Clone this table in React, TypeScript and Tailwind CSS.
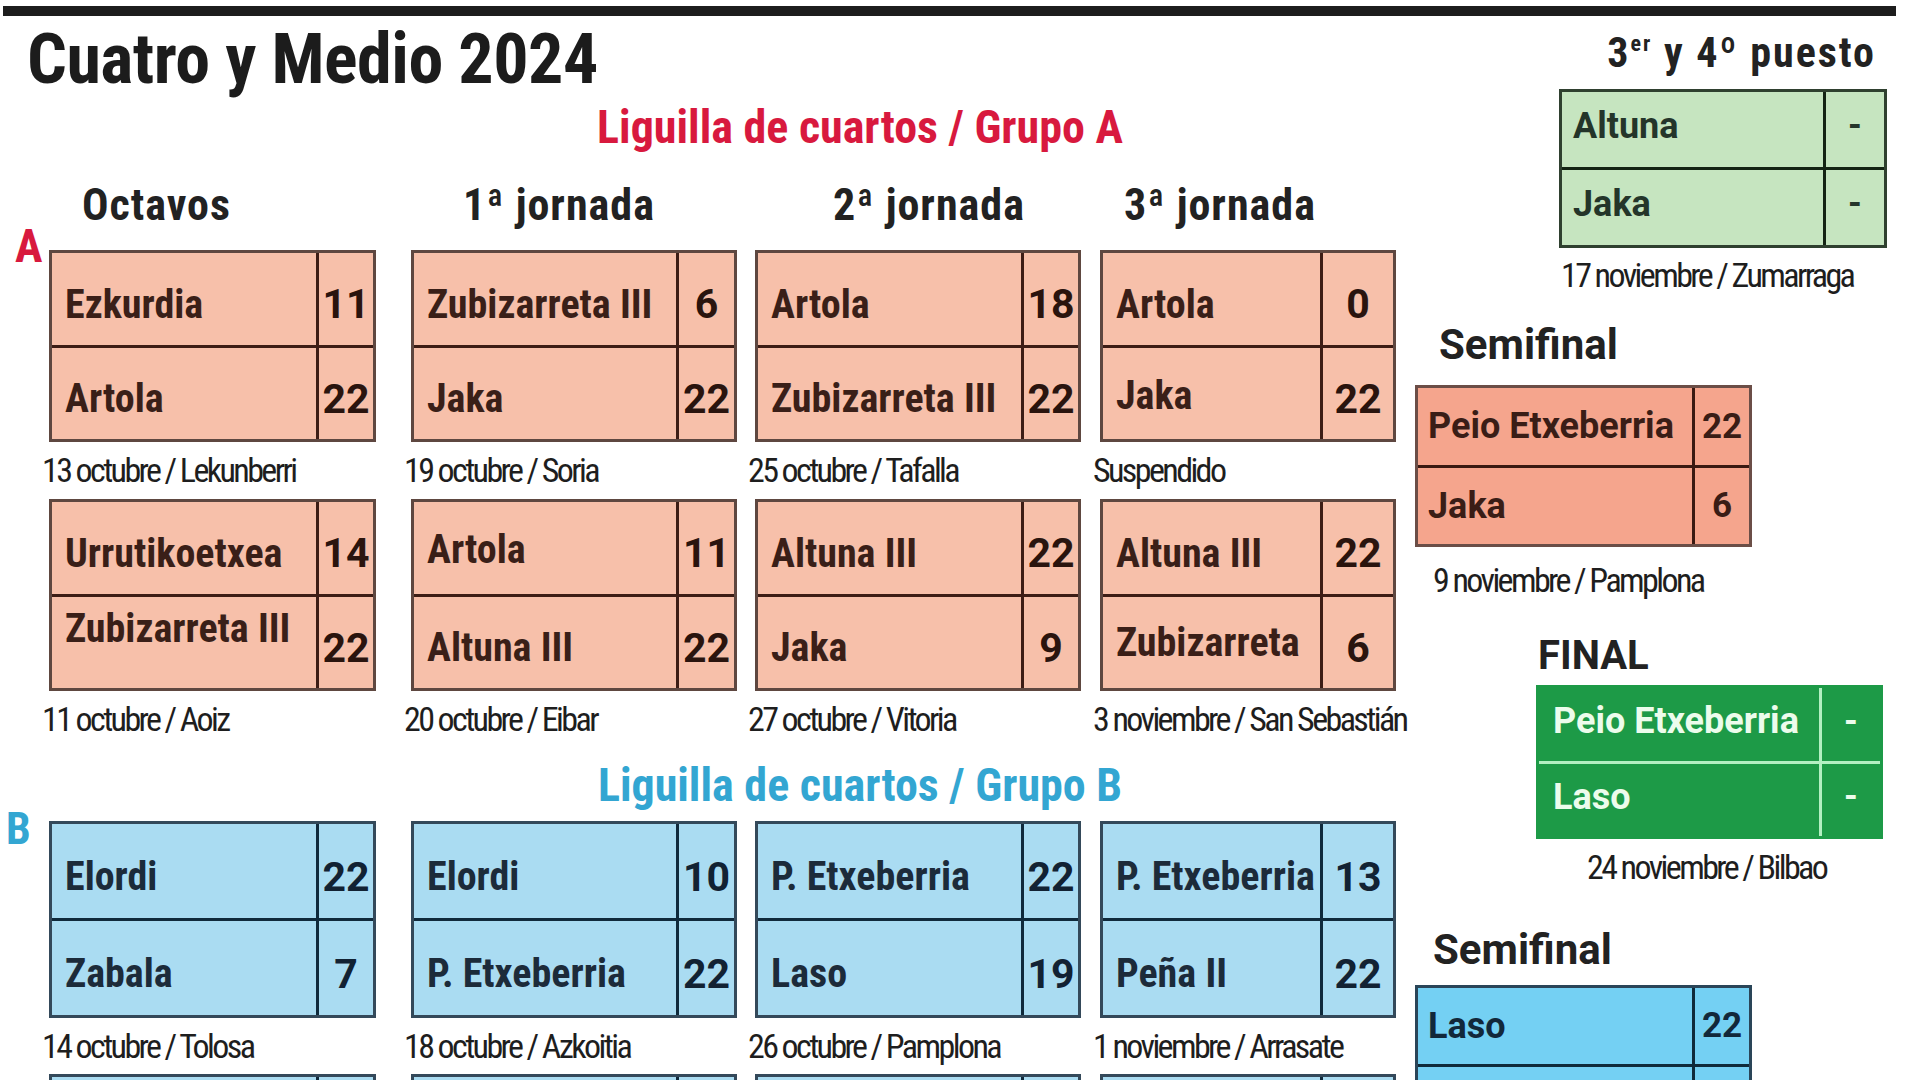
const COND = "font-['Roboto_Condensed',sans-serif]";
const WIDE = "font-['Roboto',sans-serif]";
const CAPTION = `${COND} whitespace-nowrap text-[34px] leading-none tracking-[-2.6px] text-[#1e1e1e]`;

type Player = { name: string; score: string; pad?: string };
type Match = { top: Player; bottom: Player; caption: string };

const cols = [
  { w: "w-[327px]", sw: "w-[57px]", gap: "" },
  { w: "w-[326px]", sw: "w-[58px]", gap: "ml-[35px]" },
  { w: "w-[326px]", sw: "w-[57px]", gap: "ml-[18px]" },
  { w: "w-[296px]", sw: "w-[73px]", gap: "ml-[19px]" },
];

const tones = {
  a: {
    card: "bg-[#f7c0aa] border-[#5e4740]",
    line: "border-[#3d1d15]",
    name: "text-[#3a1f18]",
    score: "text-[#2a140e]",
  },
  b: {
    card: "bg-[#aadcf2] border-[#34495a]",
    line: "border-[#102a3c]",
    name: "text-[#1c2b3a]",
    score: "text-[#122233]",
  },
};

const groupA1: Match[] = [
  { top: { name: "Ezkurdia", score: "11" }, bottom: { name: "Artola", score: "22" }, caption: "13 octubre / Lekunberri" },
  { top: { name: "Zubizarreta III", score: "6" }, bottom: { name: "Jaka", score: "22" }, caption: "19 octubre / Soria" },
  { top: { name: "Artola", score: "18" }, bottom: { name: "Zubizarreta III", score: "22" }, caption: "25 octubre / Tafalla" },
  { top: { name: "Artola", score: "0" }, bottom: { name: "Jaka", score: "22", pad: "pb-[6px]" }, caption: "Suspendido" },
];

const groupA2: Match[] = [
  { top: { name: "Urrutikoetxea", score: "14" }, bottom: { name: "Zubizarreta III", score: "22", pad: "pb-[38px]" }, caption: "11 octubre / Aoiz" },
  { top: { name: "Artola", score: "11", pad: "pb-[8px]" }, bottom: { name: "Altuna III", score: "22" }, caption: "20 octubre / Eibar" },
  { top: { name: "Altuna III", score: "22" }, bottom: { name: "Jaka", score: "9" }, caption: "27 octubre / Vitoria" },
  { top: { name: "Altuna III", score: "22" }, bottom: { name: "Zubizarreta", score: "6", pad: "pb-[10px]" }, caption: "3 noviembre / San Sebastián" },
];

const groupB1: Match[] = [
  { top: { name: "Elordi", score: "22" }, bottom: { name: "Zabala", score: "7" }, caption: "14 octubre / Tolosa" },
  { top: { name: "Elordi", score: "10" }, bottom: { name: "P. Etxeberria", score: "22" }, caption: "18 octubre / Azkoitia" },
  { top: { name: "P. Etxeberria", score: "22" }, bottom: { name: "Laso", score: "19" }, caption: "26 octubre / Pamplona" },
  { top: { name: "P. Etxeberria", score: "13" }, bottom: { name: "Peña II", score: "22" }, caption: "1 noviembre / Arrasate" },
];

const groupB2: Match[] = Array.from({ length: 4 }).map(() => ({
  top: { name: "", score: "" },
  bottom: { name: "", score: "" },
  caption: "",
}));

function MatchCard({ match, tone, col, h }: { match: Match; tone: "a" | "b"; col: (typeof cols)[number]; h: string }) {
  const t = tones[tone];
  const rows = [match.top, match.bottom];
  return (
    <div className={`flex flex-col border-[3px] ${h} ${t.card}`}>
      {rows.map((p, i) => (
        <div key={i} className={`flex flex-1 ${i === 0 ? `border-b-[3px] ${t.line}` : ""}`}>
          <div className={`flex flex-1 items-center pl-[13px] pt-[12px] ${p.pad ?? ""}`}>
            <span className={`${COND} text-[40px] font-bold leading-none ${t.name}`}>{p.name}</span>
          </div>
          <div className={`flex ${col.sw} items-center justify-center border-l-[3px] pt-[12px] ${t.line}`}>
            <span className={`${WIDE} text-[41px] font-bold leading-none ${t.score}`}>{p.score}</span>
          </div>
        </div>
      ))}
    </div>
  );
}

function CardRow({
  matches,
  tone,
  h,
  className,
  label,
}: {
  matches: Match[];
  tone: "a" | "b";
  h: string;
  className: string;
  label?: React.ReactNode;
}) {
  return (
    <div className={`flex items-start ${className}`}>
      <div className="w-[49px] shrink-0">{label}</div>
      {matches.map((m, i) => (
        <div key={i} className={`flex shrink-0 flex-col ${cols[i].w} ${cols[i].gap}`}>
          <MatchCard match={m} tone={tone} col={cols[i]} h={h} />
          <div className={`mt-[11px] -ml-[7px] h-[35px] ${CAPTION}`}>{m.caption}</div>
        </div>
      ))}
    </div>
  );
}

type BoardRow = { name: string; score: string };

function Board({
  rows,
  box,
  line,
  nameColor,
  sw,
  pl,
  pad,
}: {
  rows: BoardRow[];
  box: string;
  line: string;
  nameColor: string;
  sw: string;
  pl: string;
  pad: string;
}) {
  return (
    <div className={`flex flex-col border-[3px] ${box}`}>
      {rows.map((r, i) => (
        <div key={i} className={`flex flex-1 ${i === 0 ? `border-b-[3px] ${line}` : ""}`}>
          <div className={`flex flex-1 items-center ${pl} ${pad}`}>
            <span className={`${WIDE} text-[36px] font-bold leading-none ${nameColor}`}>{r.name}</span>
          </div>
          <div className={`flex ${sw} items-center justify-center border-l-[3px] ${line} ${pad}`}>
            <span className={`${WIDE} text-[35px] font-bold leading-none ${nameColor}`}>{r.score}</span>
          </div>
        </div>
      ))}
    </div>
  );
}

function ColumnHeaders() {
  const head = `${COND} text-[44px] font-bold leading-none tracking-[1px] text-[#222]`;
  return (
    <div className="mt-[33px] flex h-[44px]">
      <div className={`w-[411px] pl-[82px] ${head}`}>Octavos</div>
      <div className={`w-[344px] pl-[52px] ${head}`}>1ª jornada</div>
      <div className={`w-[345px] pl-[78px] ${head}`}>2ª jornada</div>
      <div className={`pl-[24px] ${head}`}>3ª jornada</div>
    </div>
  );
}

export default function App() {
  const semiTitle = `${WIDE} text-[42px] font-bold leading-none text-[#222]`;
  return (
    <div className="h-[1080px] w-[1920px] overflow-hidden bg-white">
      <div className="ml-[3px] mt-[6px] h-[10px] w-[1893px] bg-[#1d1d1d]" />
      <div className="flex">
        {/* groups */}
        <div className="flex w-[1410px] shrink-0 flex-col">
          <h1 className={`mt-[8px] pl-[27px] ${COND} text-[70px] font-bold leading-none tracking-[-0.5px] text-[#1c1c1c]`}>
            Cuatro y Medio 2024
          </h1>
          <h2 className={`mt-[10px] pl-[310px] text-center ${COND} text-[46px] font-bold leading-none text-[#d8193e]`}>
            Liguilla de cuartos / Grupo A
          </h2>
          <ColumnHeaders />
          <CardRow
            matches={groupA1}
            tone="a"
            h="h-[192px]"
            className="mt-[23px]"
            label={<div className={`-mt-[27px] pl-[15px] ${COND} text-[46px] font-bold leading-none text-[#d8193e]`}>A</div>}
          />
          <CardRow matches={groupA2} tone="a" h="h-[192px]" className="mt-[11px]" />
          <h2 className={`mt-[25px] pl-[310px] text-center ${COND} text-[46px] font-bold leading-none text-[#33a6d2]`}>
            Liguilla de cuartos / Grupo B
          </h2>
          <CardRow
            matches={groupB1}
            tone="b"
            h="h-[197px]"
            className="mt-[13px]"
            label={<div className={`-mt-[14px] pl-[6px] ${COND} text-[44px] font-bold leading-none text-[#33a6d2]`}>B</div>}
          />
          <CardRow matches={groupB2} tone="b" h="h-[197px]" className="mt-[10px]" />
        </div>

        {/* finals */}
        <div className="flex flex-1 flex-col">
          <div className={`mt-[16px] pr-[44px] text-right ${COND} text-[42px] font-bold leading-none tracking-[2px] text-[#222]`}>
            3<sup className="top-[-16px] text-[22px]">er</sup> y 4º puesto
          </div>
          <div className="ml-[149px] mt-[15px] h-[159px] w-[328px]">
            <Board
              rows={[
                { name: "Altuna", score: "-" },
                { name: "Jaka", score: "-" },
              ]}
              box="h-full bg-[#c6e5c0] border-[#2f402f]"
              line="border-[#142414]"
              nameColor="text-[#24352a]"
              sw="w-[61px]"
              pl="pl-[11px]"
              pad="pb-[8px]"
            />
          </div>
          <div className={`ml-[151px] mt-[10px] h-[35px] ${CAPTION}`}>17 noviembre / Zumarraga</div>

          <div className={`ml-[29px] mt-[31px] ${semiTitle}`}>Semifinal</div>
          <div className="ml-[5px] mt-[19px] h-[162px] w-[337px]">
            <Board
              rows={[
                { name: "Peio Etxeberria", score: "22" },
                { name: "Jaka", score: "6" },
              ]}
              box="h-full bg-[#f5a58d] border-[#6b4e47]"
              line="border-[#3a1a12]"
              nameColor="text-[#3a1d16]"
              sw="w-[57px]"
              pl="pl-[10px]"
              pad=""
            />
          </div>
          <div className={`ml-[23px] mt-[16px] h-[35px] ${CAPTION}`}>9 noviembre / Pamplona</div>

          <div className={`ml-[128px] mt-[38px] ${WIDE} text-[40px] font-bold leading-none text-[#222]`}>FINAL</div>
          <div className="ml-[126px] mt-[9px] h-[154px] w-[347px]">
            <Board
              rows={[
                { name: "Peio Etxeberria", score: "-" },
                { name: "Laso", score: "-" },
              ]}
              box="h-full bg-[#1d9a47] border-[#1d9a47]"
              line="border-[#b3f0c2]"
              nameColor="text-[#ecfcec]"
              sw="w-[61px]"
              pl="pl-[14px]"
              pad="pb-[6px]"
            />
          </div>
          <div className={`ml-[177px] mt-[11px] h-[35px] ${CAPTION}`}>24 noviembre / Bilbao</div>

          <div className={`ml-[23px] mt-[44px] ${semiTitle}`}>Semifinal</div>
          <div className="ml-[5px] mt-[14px] h-[160px] w-[337px]">
            <Board
              rows={[
                { name: "Laso", score: "22" },
                { name: "", score: "" },
              ]}
              box="h-full bg-[#74d0f3] border-[#2a4558]"
              line="border-[#0e2a3a]"
              nameColor="text-[#12283a]"
              sw="w-[57px]"
              pl="pl-[10px]"
              pad=""
            />
          </div>
        </div>
      </div>
    </div>
  );
}
